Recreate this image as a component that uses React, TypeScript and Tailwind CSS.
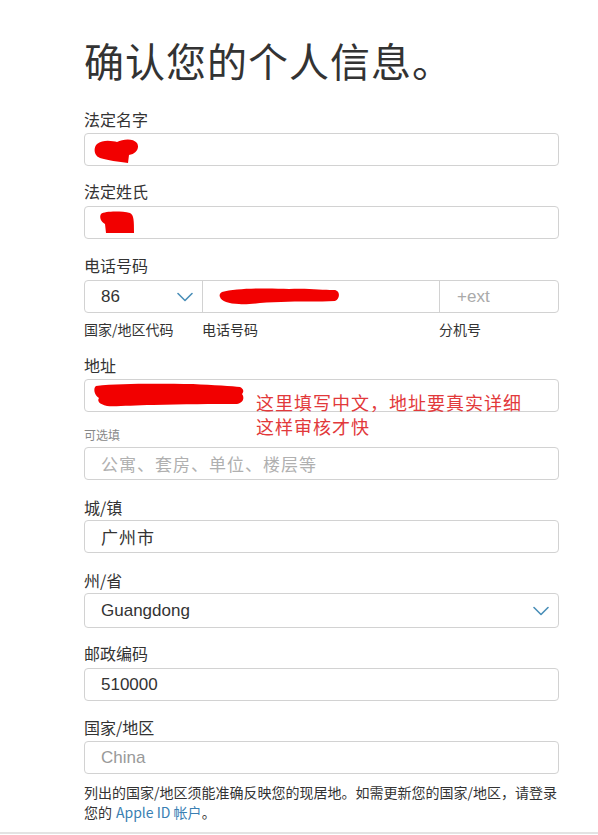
import React from "react";

const cjk = "font-['Noto_Sans_CJK_SC','Noto_Sans',sans-serif]";
const latin = "font-['Liberation_Sans','Noto_Sans_CJK_SC',sans-serif]";

function Chevron() {
  return (
    <svg width="16" height="10" viewBox="0 0 16 10" fill="none">
      <path d="M1 1.5 L8 8.5 L15 1.5" stroke="#4a8fb8" strokeWidth="1.6" strokeLinecap="round" strokeLinejoin="round" />
    </svg>
  );
}

function Label({ text, className = "" }: { text: string; className?: string }) {
  return <div className={`${cjk} text-[16px] leading-5 text-[#333] ${className}`}>{text}</div>;
}

function Box({ children, className = "" }: { children?: React.ReactNode; className?: string }) {
  return (
    <div className={`relative flex h-[33px] items-center rounded-[4px] border border-[#d2d2d2] bg-white px-4 ${className}`}>
      {children}
    </div>
  );
}

export default function App() {
  return (
    <div className="min-h-screen bg-white">
      <div className="ml-[84px] w-[475px] pt-[36px]">
        <h1 className={`${cjk} text-[40px] leading-[48px] font-normal tracking-[1px] text-[#333]`}>确认您的个人信息。</h1>

        <Label text="法定名字" className="mt-[25px] mb-[4px]" />
        <Box>
          <svg className="absolute left-[8px] top-[4px]" width="46" height="26" viewBox="0 0 46 26">
            <path d="M4 6 C10 1 20 3 24 4 C30 1 40 0 44 5 C47 10 43 16 36 17 L35 25 C26 24 14 22 7 20 C1 18 0 10 4 6 Z" fill="#f20000" />
          </svg>
        </Box>

        <Label text="法定姓氏" className="mt-[15px] mb-[5px]" />
        <Box>
          <svg className="absolute left-[14px] top-[4px]" width="36" height="23" viewBox="0 0 36 23">
            <path d="M2 3 C6 0 22 0 31 2 C35 4 35 10 35 22 L7 22 L6 13 C2 11 0 6 2 3 Z" fill="#f20000" />
          </svg>
        </Box>

        <Label text="电话号码" className="mt-[16px] mb-[5px]" />
        <div className="relative flex h-[33px] rounded-[4px] border border-[#d2d2d2] bg-white">
          <div className={`${latin} flex w-[117px] items-center justify-between pl-4 pr-[9px] text-[17px] text-[#333]`}>
            <span>86</span>
            <Chevron />
          </div>
          <div className="relative w-[237px] border-l border-[#d2d2d2]">
            <svg className="absolute left-[16px] top-[4px]" width="122" height="22" viewBox="0 0 122 22">
              <path d="M3 7 C18 3 50 3 70 4 C88 3 104 5 114 5 C121 4 122 13 116 16 C100 17 80 16 62 17 C44 17 30 20 20 19 C10 19 2 16 1 12 C0 10 1 8 3 7 Z" fill="#f20000" />
            </svg>
          </div>
          <div className={`${latin} flex flex-1 items-center border-l border-[#d2d2d2] pl-[17px] text-[17px] text-[#aaa]`}>+ext</div>
        </div>
        <div className={`${cjk} mt-[6px] flex text-[14px] leading-5 text-[#333]`}>
          <span className="w-[118px]">国家/地区代码</span>
          <span className="w-[237px]">电话号码</span>
          <span>分机号</span>
        </div>

        <div className="relative">
          <Label text="地址" className="mt-[16px] mb-[4px]" />
          <Box>
            <svg className="absolute left-[8px] top-[2px]" width="152" height="25" viewBox="0 0 152 25">
              <path d="M3 4 C30 1 70 2 100 2 C120 3 140 4 147 5 C151 7 151 10 149 12 C152 16 150 21 144 22 C120 22 90 22 60 23 C40 23 22 25 14 24 C6 22 4 19 6 16 C1 13 0 6 3 4 Z" fill="#f20000" />
            </svg>
          </Box>
          <div className={`${cjk} absolute left-[172px] top-[35px] text-[18px] leading-[24px] tracking-[1px] text-[#e2393b]`}>
            <div>这里填写中文，地址要真实详细</div>
            <div>这样审核才快</div>
          </div>
        </div>

        <div className={`${cjk} mt-[15px] mb-[4px] text-[12px] leading-4 text-[#888]`}>可选填</div>
        <Box>
          <span className={`${cjk} text-[17px] tracking-[1px] text-[#b0b0b0]`}>公寓、套房、单位、楼层等</span>
        </Box>

        <Label text="城/镇" className="mt-[17px] mb-[3px]" />
        <Box>
          <span className={`${cjk} text-[17px] tracking-[1px] text-[#333]`}>广州市</span>
        </Box>

        <Label text="州/省" className="mt-[17px] mb-[3px]" />
        <Box className="h-[35px] justify-between pr-[9px]">
          <span className={`${latin} text-[17px] text-[#333]`}>Guangdong</span>
          <Chevron />
        </Box>

        <Label text="邮政编码" className="mt-[15px] mb-[5px]" />
        <Box>
          <span className={`${latin} text-[17px] text-[#333]`}>510000</span>
        </Box>

        <Label text="国家/地区" className="mt-[16px] mb-[4px]" />
        <Box className="bg-[#f3f3f3]">
          <span className={`${latin} text-[17px] text-[#999]`}>China</span>
        </Box>

        <div className={`${cjk} mt-[8px] text-[14px] leading-5 text-[#333]`}>
          <div>列出的国家/地区须能准确反映您的现居地。如需更新您的国家/地区，请登录</div>
          <div className="flex gap-[4px]">
            <span>您的</span>
            <span className="text-[#3a7fb3]">Apple ID 帐户</span>
            <span className="-ml-[4px]">。</span>
          </div>
        </div>
      </div>
      <div className="mt-[10px] h-[2px] w-full bg-[#e3e3e3]" />
    </div>
  );
}
